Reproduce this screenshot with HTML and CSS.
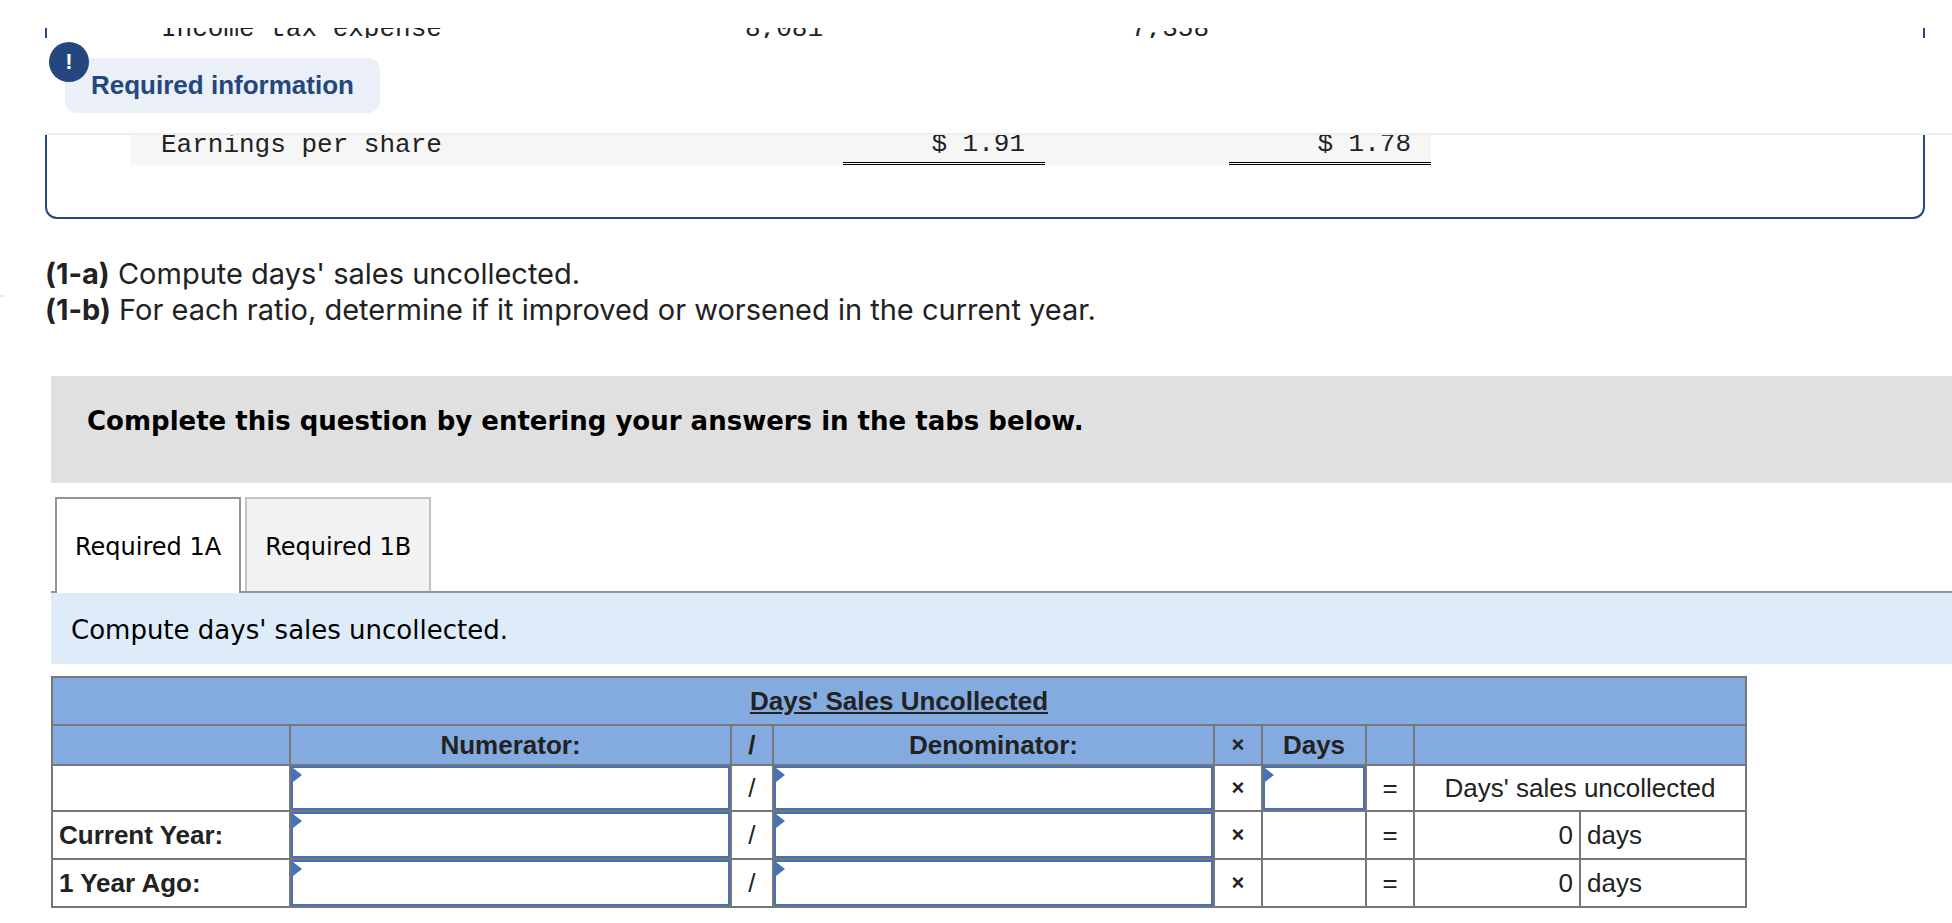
FILE: index.html
```html
<!DOCTYPE html>
<html lang="en">
<head>
  <meta charset="UTF-8">
  <meta name="viewport" content="width=device-width, initial-scale=1.0">
  <title>Days' Sales Uncollected</title>
  <link rel="stylesheet" href="styles.css">
</head>
<body>

<div class="page">
  <section class="passage">
    <div class="sticky-head">
      <span class="alert-icon">!</span>
      <h2 class="required-label">Required information</h2>
    </div>
    <div class="passage-box">
      <table class="statement">
        <colgroup>
          <col><col class="amount"><col class="eps"><col class="gap"><col class="eps">
        </colgroup>
        <tr class="tax">
          <td>Income tax expense</td>
          <td class="num">8,081</td>
          <td></td>
          <td class="num">7,358</td>
          <td></td>
        </tr>
        <tr class="shaded">
          <td>Earnings per share</td>
          <td></td>
          <td class="total">$ 1.91</td>
          <td></td>
          <td class="total">$ 1.78</td>
        </tr>
      </table>
    </div>
  </section>

  <div class="question">
    <p><b>(1-a)</b> Compute days' sales uncollected.</p>
    <p><b>(1-b)</b> For each ratio, determine if it improved or worsened in the current year.</p>
  </div>

  <main class="worksheet">
    <h3 class="instruction">Complete this question by entering your answers in the tabs below.</h3>

    <div class="tabs" role="tablist">
      <button type="button" class="tab active" role="tab" aria-selected="true">Required 1A</button>
      <button type="button" class="tab" role="tab" aria-selected="false">Required 1B</button>
    </div>

    <p class="prompt">Compute days' sales uncollected.</p>

    <div class="answer">
      <table class="sheet">
        <colgroup>
          <col class="c-label"><col><col class="c-slash"><col><col class="c-sign"><col class="c-days"><col class="c-sign"><col class="c-result"><col class="c-result">
        </colgroup>
        <thead>
          <tr class="title-row">
            <th colspan="9"><u>Days' Sales Uncollected</u></th>
          </tr>
          <tr class="head-row">
            <th></th>
            <th>Numerator:</th>
            <th>/</th>
            <th>Denominator:</th>
            <th class="times">×</th>
            <th>Days</th>
            <th></th>
            <th colspan="2"></th>
          </tr>
        </thead>
        <tbody>
          <tr class="names">
            <th></th>
            <td class="entry"><input type="text" aria-label="Numerator name"></td>
            <td>/</td>
            <td class="entry"><input type="text" aria-label="Denominator name"></td>
            <td class="times">×</td>
            <td class="entry"><input type="text" aria-label="Days"></td>
            <td>=</td>
            <td colspan="2">Days' sales uncollected</td>
          </tr>
          <tr>
            <th>Current Year:</th>
            <td class="entry"><input type="text" aria-label="Current year numerator"></td>
            <td>/</td>
            <td class="entry"><input type="text" aria-label="Current year denominator"></td>
            <td class="times">×</td>
            <td></td>
            <td>=</td>
            <td class="value">0</td>
            <td class="unit">days</td>
          </tr>
          <tr>
            <th>1 Year Ago:</th>
            <td class="entry"><input type="text" aria-label="1 year ago numerator"></td>
            <td>/</td>
            <td class="entry"><input type="text" aria-label="1 year ago denominator"></td>
            <td class="times">×</td>
            <td></td>
            <td>=</td>
            <td class="value">0</td>
            <td class="unit">days</td>
          </tr>
        </tbody>
      </table>
    </div>
  </main>
</div>

</body>
</html>
```
FILE: styles.css
```css
* {
  box-sizing: border-box;
}

body {
  margin: 0;
  background: #fff;
  color: #222;
  font-family: "Liberation Sans", Arial, sans-serif;
  font-size: 26px;
}

h2, h3, p {
  margin: 0;
}

.page {
  position: relative;
  padding: 28px 0 14px 45px;
}

/* end of the side divider */
.page::before {
  content: "";
  position: absolute;
  left: 0;
  top: 295px;
  width: 5px;
  height: 2px;
  background: #eee;
}

/* passage, scrolled under its heading */
.passage {
  position: relative;
  overflow: hidden;
}

.sticky-head {
  position: absolute;
  top: 10px;
  left: 0;
  right: 0;
  padding: 20px 0 20px 20px;
  background: #fff;
  border-bottom: 2px solid #eee;
}

.required-label {
  display: inline-block;
  vertical-align: top;
  padding: 0 26px;
  line-height: 55px;
  font-size: 26px;
  color: #24477f;
  background: #ebf0f8;
  border-radius: 12px;
}

.alert-icon {
  position: absolute;
  left: 4px;
  top: 4px;
  width: 40px;
  height: 40px;
  border-radius: 50%;
  background: #24477f;
  color: #fff;
  font-size: 22px;
  font-weight: bold;
  line-height: 40px;
  text-align: center;
}

.passage-box {
  margin-right: 27px;
  padding: 0 84px 52px;
  border: 2px solid #24477f;
  border-top: 0;
  border-radius: 0 0 12px 12px;
}

.statement {
  width: 1300px;
  max-width: 100%;
  margin-top: -14px;
  table-layout: fixed;
  border-spacing: 0;
  font-family: "Liberation Mono", "Courier New", monospace;
  line-height: 30px;
}

.statement .amount {
  width: 186px;
}

.statement .eps {
  width: 202px;
}

.statement .gap {
  width: 184px;
}

.statement td {
  padding: 0;
  white-space: nowrap;
}

.statement td:first-child {
  padding-left: 30px;
}

.statement .tax td {
  height: 107px;
  vertical-align: top;
}

.statement .num {
  text-align: right;
  padding-right: 20px;
}

.statement .shaded td {
  height: 44px;
  padding-top: 4px;
  background: #f6f6f6;
}

.statement .shaded .total {
  padding-right: 20px;
  text-align: right;
  border-bottom: 3px double #000;
}

.question {
  padding: 37px 0 38px;
  font-family: "Proxima Nova", Inter, sans-serif;
  font-size: 29px;
  line-height: 36px;
}

.worksheet {
  margin: 10px 0 0 6px;
}

.instruction {
  height: 107px;
  padding: 25px 36px;
  background: #e0e0e0;
  color: #000;
  font-family: Verdana, "DejaVu Sans", sans-serif;
  font-size: 26px;
  line-height: 40px;
}

.tabs {
  display: flex;
  gap: 4px;
  margin-top: 14px;
  padding-left: 4px;
  border-bottom: 2px solid #949494;
}

.tab {
  min-width: 186px;
  height: 94px;
  padding: 4px 18px 0;
  border: 2px solid #c4c4c4;
  border-bottom: 0;
  background: #f2f2f2;
  color: #000;
  font-family: Verdana, "DejaVu Sans", sans-serif;
  font-size: 24px;
  white-space: nowrap;
}

.tab.active {
  height: 96px;
  margin-bottom: -2px;
  padding-bottom: 2px;
  border-color: #949494;
  background: #fff;
}

.prompt {
  padding: 3px 20px 0;
  background: #deebf8;
  color: #000;
  font-family: Verdana, "DejaVu Sans", sans-serif;
  line-height: 68px;
}

/* answer table */
.answer {
  padding: 12px 205px 0 0;
}

.sheet {
  width: 100%;
  table-layout: fixed;
  border-collapse: collapse;
  line-height: 30px;
}

.c-label {
  width: 238px;
}

.c-slash {
  width: 42px;
}

.c-sign {
  width: 48px;
}

.c-days {
  width: 104px;
}

.c-result {
  width: 166px;
}

.sheet th,
.sheet td {
  height: 48px;
  padding: 0;
  border: 2px solid #777;
  text-align: center;
}

.sheet thead th {
  background: #84abdf;
}

.sheet .head-row th {
  height: 40px;
}

.sheet .names th,
.sheet .names td {
  height: 46px;
}

.sheet tbody th {
  padding-left: 6px;
  text-align: left;
}

.sheet .times {
  font-size: 22px;
  font-weight: bold;
}

.sheet .value {
  padding-right: 6px;
  text-align: right;
}

.sheet .unit {
  padding-left: 6px;
  text-align: left;
}

.entry {
  position: relative;
}

.entry::before {
  content: "";
  position: absolute;
  left: 2px;
  top: 2px;
  width: 9px;
  height: 14px;
  background: #4673b5;
  clip-path: polygon(0 0, 100% 50%, 0 100%);
}

.entry input {
  display: block;
  width: 100%;
  height: 46px;
  padding: 0 14px;
  border: 2px solid #4673b5;
  border-radius: 0;
  background: #fff;
  color: #222;
  font: inherit;
}

.names .entry input {
  height: 44px;
}
```
